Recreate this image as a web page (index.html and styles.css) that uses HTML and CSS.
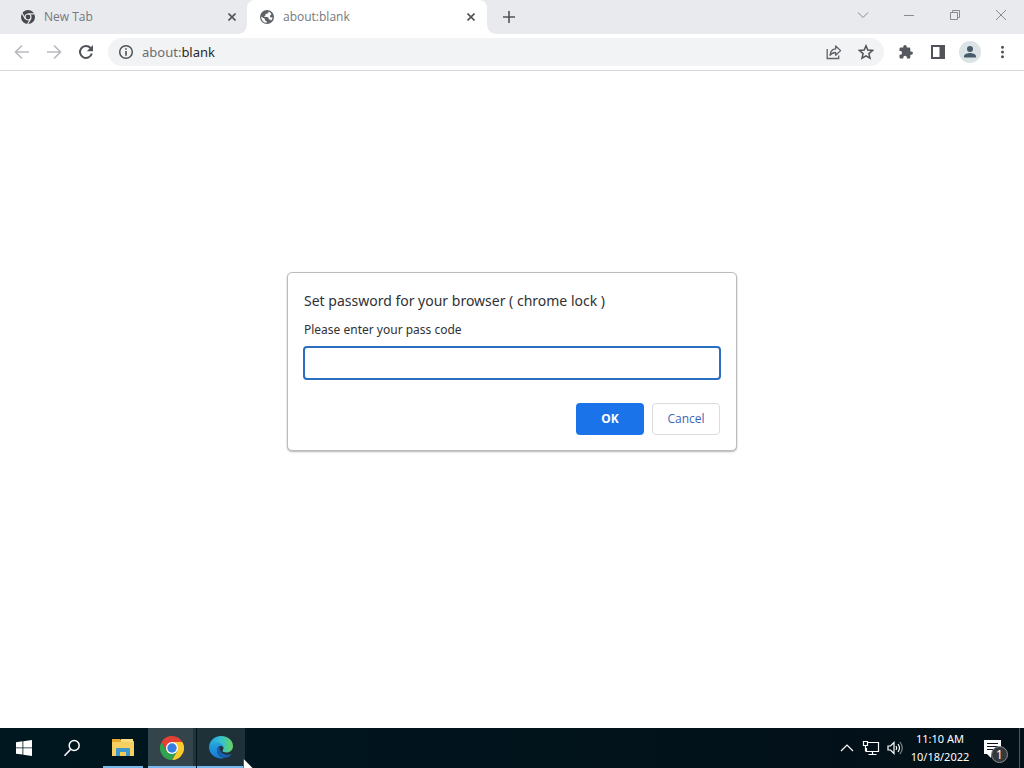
FILE: index.html
```
<!DOCTYPE html>
<html lang="en">
  <head>
    <meta charset="utf-8" />
    <meta name="viewport" content="width=device-width, initial-scale=1.0" />
    <title>about:blank</title>
    <link rel="stylesheet" href="styles.css">
  </head>
  <body>
    <header class="tab-strip">
      <div class="tab">
        <svg class="favicon" viewBox="0 0 16 16">
          <circle cx="8" cy="8" r="7" fill="#45484c" />
          <circle cx="8" cy="8" r="3" fill="none" stroke="#e8eaed" stroke-width="1.2" />
          <path d="M8 4.8h6.4M5.2 9.6L2 4M10.8 9.6L7.6 15" stroke="#e8eaed" stroke-width="1.2" />
        </svg>
        <span class="tab-title">New Tab</span>
        <button class="tab-close" aria-label="Close New Tab">
          <svg width="8" height="8" viewBox="0 0 8 8"><path d="M0.5 0.5l7 7M7.5 0.5l-7 7" /></svg>
        </button>
      </div>
      <div class="tab active">
        <svg class="favicon" viewBox="0 0 16 16">
          <circle cx="8" cy="8" r="7" fill="#5f6368" />
          <path d="M9.500 2.600c.3 1.600-.8 2.200-1.800 2.200-.9 0-1.200.5-1.200 1.200 0 .8-.6 1-1.400 1 .2.900.9 1 2 1h1c1.200 0 1.500.8 1.500 1.600 0 .7.700.9 1.400 1 .8.100 1 .7 1 1.200A6 6 0 0 0 13.600 8.500c-1.500.4-2.600-.2-2.600-1.300 0-1 .8-1.500 1.500-2A6 6 0 0 0 9.500 2.600zM2.200 7.600A5.800 5.800 0 0 0 7.800 13.800c.2-1-.1-1.600-.9-1.800-1-.3-.9-1.100-1-1.800-.1-.8-.7-1-1.500-1.300z" fill="#fff" />
        </svg>
        <span class="tab-title">about:blank</span>
        <button class="tab-close" aria-label="Close about:blank">
          <svg width="8" height="8" viewBox="0 0 8 8"><path d="M0.5 0.5l7 7M7.5 0.5l-7 7" /></svg>
        </button>
      </div>
      <button class="new-tab" aria-label="New tab">
        <svg width="12" height="12" viewBox="0 0 12 12"><path d="M6 0v12M0 6h12" /></svg>
      </button>
      <div class="window-controls">
        <button aria-label="Search tabs">
          <svg width="12" height="12" viewBox="0 0 12 12"><path d="M1 3.500l5 5 5-5" /></svg>
        </button>
        <button aria-label="Minimize">
          <svg width="12" height="12" viewBox="0 0 12 12"><path d="M1 6.500h10" /></svg>
        </button>
        <button aria-label="Restore">
          <svg width="12" height="12" viewBox="0 0 12 12"><path d="M1.500 3.500h7v7h-7zM3.500 3.500v-2h7v7h-2" /></svg>
        </button>
        <button aria-label="Close">
          <svg width="12" height="12" viewBox="0 0 12 12"><path d="M1 1l10 10M11 1L1 11" /></svg>
        </button>
      </div>
    </header>

    <nav class="toolbar">
      <button class="tool" aria-label="Back">
        <svg width="16" height="16" viewBox="0 0 16 16"><path d="M15 8H2M8 1.500L1.500 8 8 14.500" fill="none" stroke="#b9bbbe" stroke-width="1.700" /></svg>
      </button>
      <button class="tool" aria-label="Forward">
        <svg width="16" height="16" viewBox="0 0 16 16"><path d="M1 8h13M8 1.500L14.500 8 8 14.500" fill="none" stroke="#b9bbbe" stroke-width="1.700" /></svg>
      </button>
      <button class="tool" aria-label="Reload">
        <svg width="16" height="16" viewBox="0 0 16 16">
          <path d="M13.800 9.500A6 6 0 1 1 12.500 4" fill="none" stroke="#505357" stroke-width="2" />
          <path d="M15 1v6.200H8.800z" fill="#505357" />
        </svg>
      </button>
      <div class="omnibox">
        <svg width="16" height="16" viewBox="0 0 16 16">
          <circle cx="8" cy="8" r="6.300" fill="none" stroke="#505357" stroke-width="1.500" />
          <path d="M7.200 4.300h1.600v1.500H7.200zM7.200 7h1.600v4.700H7.200z" fill="#505357" />
        </svg>
        <div class="url">about:<span>blank</span></div>
        <button class="tool" aria-label="Share">
          <svg width="16" height="16" viewBox="0 0 16 16" fill="none" stroke="#5f6368" stroke-width="1.300">
            <path d="M1.200 5v9.500h11.500v-3" />
            <path d="M9.700 2v2.900C6 5.200 4.300 7.600 4 11.300c1.300-1.900 3-2.800 5.700-2.800v2.800L14.600 6.600z" stroke-linejoin="round" />
          </svg>
        </button>
        <button class="tool" aria-label="Bookmark">
          <svg width="16" height="16" viewBox="0 0 16 16"><path d="M8 1.800l1.800 4.300 4.700.4-3.600 3.100 1.100 4.600L8 11.800l-4 2.400 1.100-4.600-3.600-3.100 4.700-.4z" fill="none" stroke="#505357" stroke-width="1.500" /></svg>
        </button>
      </div>
      <button class="tool" aria-label="Extensions">
        <svg width="16" height="16" viewBox="0 0 16 16"><path d="M13.300 7.400h-1V4.700c0-.8-.6-1.300-1.300-1.300H8.700v-.8a1.700 1.700 0 0 0-3.400 0v.8H2.800c-.7 0-1.300.6-1.300 1.300v2.400h.8a1.800 1.800 0 0 1 0 3.600h-.8v2.500c0 .7.6 1.300 1.300 1.300h2.500v-.9a1.800 1.800 0 0 1 3.600 0v.9h2.200c.7 0 1.200-.6 1.200-1.300v-2.500h1a1.600 1.600 0 0 0 0-3.300z" fill="#55585c" /></svg>
      </button>
      <button class="tool" aria-label="Side panel">
        <svg width="16" height="16" viewBox="0 0 16 16"><path d="M1 1h14v14H1zM3 3v10h6.500V3z" fill="#505357" fill-rule="evenodd" /></svg>
      </button>
      <button class="tool avatar" aria-label="Profile">
        <svg width="16" height="16" viewBox="0 0 16 16" fill="#465a69"><circle cx="8" cy="5" r="3" /><path d="M2 13.500v-1.300C2 10 6 9 8 9s6 1 6 3.200v1.300z" /></svg>
      </button>
      <button class="tool" aria-label="Menu">
        <svg width="16" height="16" viewBox="0 0 16 16" fill="#505357"><circle cx="8.500" cy="3.300" r="1.500" /><circle cx="8.500" cy="8" r="1.500" /><circle cx="8.500" cy="12.700" r="1.500" /></svg>
      </button>
    </nav>

    <main class="page">
      <form class="dialog" role="dialog" aria-labelledby="dialog-title">
        <h1 id="dialog-title">Set password for your browser ( chrome lock )</h1>
        <label for="passcode">Please enter your pass code</label>
        <input id="passcode" type="password">
        <div class="dialog-actions">
          <button class="ok" type="button">OK</button>
          <button class="cancel" type="button">Cancel</button>
        </div>
      </form>
    </main>

    <footer class="taskbar">
      <button class="task" aria-label="Start">
        <svg width="16" height="16" viewBox="0 0 16 16" fill="#fff"><path d="M0 2.200l6.500-.9v6.200H0zM7.300 1.200L16 0v7.500H7.300zM0 8.300h6.500v6.300L0 13.700zM7.300 8.300H16V16l-8.700-1.200z" /></svg>
      </button>
      <button class="task search" aria-label="Search">
        <svg width="18" height="18" viewBox="0 0 18 18"><path d="M7.500 10.500L1.500 16.800" stroke="#fff" stroke-width="1.600" /><circle cx="11.200" cy="6.500" r="5" fill="none" stroke="#fff" stroke-width="1.500" /></svg>
      </button>
      <button class="task explorer" aria-label="File Explorer">
        <svg width="22" height="20" viewBox="0 0 22 20">
          <path d="M0 2h8l2 2h12v14H0z" fill="#e9a92c" />
          <path d="M9 2h12v3H9z" fill="#f7dc82" />
          <path d="M0 5h22v14H0z" fill="#f5d061" />
          <path d="M4 12q0-1 1-1h12q1 0 1 1v7h-4v-4H8v4H4z" fill="#3f97cb" />
          <path d="M8 15h6v4H8z" fill="#f3cc55" />
        </svg>
      </button>
      <button class="task open chrome" aria-label="Google Chrome">
        <svg width="24" height="24" viewBox="0 0 24 24">
          <path d="M12 12V6h10.400A12 12 0 0 1 12 24l5.200-9z" fill="#fcca2d" />
          <path d="M12 12l5.200 3L12 24A12 12 0 0 1 1.600 6l5.200 9z" fill="#31a350" />
          <path d="M1.600 6l5.200 9L12 12V6.100h10.400A12 12 0 0 0 1.600 6z" fill="#e44134" />
          <circle cx="12" cy="12" r="6" fill="#fff" />
          <circle cx="12" cy="12" r="4.700" fill="#367de4" />
        </svg>
      </button>
      <button class="task open" aria-label="Microsoft Edge">
        <svg width="24" height="24" viewBox="0 0 24 24">
          <defs>
            <linearGradient id="wave" x1="0" y1="0" x2="1" y2="0">
              <stop offset="0" stop-color="#279fdc" />
              <stop offset="0.500" stop-color="#35c1d1" />
              <stop offset="1" stop-color="#68d35b" />
            </linearGradient>
            <linearGradient id="body" x1="0" y1="0" x2="0" y2="1">
              <stop offset="0" stop-color="#26a4df" />
              <stop offset="1" stop-color="#1479d2" />
            </linearGradient>
          </defs>
          <path d="M0 12C0 5 5 0 12 0c7 0 12 4.500 12 10 0 4-3 6.500-6.500 6.500-2.500 0-4-.8-4-1.700 0-.7 1-1.200 1-3 0-2.400-2.600-4.600-6-4.600C4 7.200 1 9 0 12z" fill="url(#wave)" />
          <path d="M0 12c1-3.500 4-5.400 8.200-5.400 3.700 0 6.300 2.300 6.300 5.200-.6-1.200-1.700-1.800-3-1.800-2 0-3.500 2-3.500 4.400 0 4.600 4.400 7.600 9 7.100A12 12 0 0 1 0 12z" fill="url(#body)" />
          <path d="M10.500 10.200C8.700 11 8 12.700 8 14.400c0 5.600 6.700 8.400 11.700 6.500 1.300-.9 2.200-1.900 3-3.200-4.700 2.300-12.600.5-12.200-7.500z" fill="#1a5fad" />
        </svg>
      </button>
      <div class="tray">
        <button aria-label="Show hidden icons">
          <svg width="16" height="16" viewBox="0 0 16 16"><path d="M2 11l6-6 6 6" /></svg>
        </button>
        <button aria-label="Network">
          <svg width="18" height="16" viewBox="0 0 18 16"><path d="M6 2.500h10.500v9H4.500V8M10.500 11.500v3M6.500 14.500h8M1.500 1.500h4v4h-4zM3.500 5.500v6" /></svg>
        </button>
        <button aria-label="Volume">
          <svg width="18" height="16" viewBox="0 0 18 16"><path d="M2 6h2.500L8 2.500v11L4.500 10H2zM10 6q1.500 2 0 4M12 4q3 4 0 8" /><path d="M14 2q4.500 6 0 12" opacity="0.500" /></svg>
        </button>
        <time class="clock" datetime="2022-10-18T11:10">11:10 AM<br>10/18/2022</time>
        <button class="notifications" aria-label="Notifications">
          <svg width="24" height="24" viewBox="0 0 24 24">
            <path d="M0 0h17v14H7v4l-4-4H0z" fill="#fff" stroke="none" />
            <path d="M3 3.500h11M3 6.500h11M3 9.500h7" stroke="#06141f" />
          </svg>
          <span class="badge">1</span>
        </button>
      </div>
    </footer>

    <svg class="cursor" width="12" height="19" viewBox="0 0 12 19"><path d="M0.500 0.500v16l3.700-3.600 2.400 5.500 2.400-1-2.300-5.400h5z" fill="#fff" stroke="#111" stroke-width="0.500" /></svg>
  </body>
</html>
```

FILE: styles.css
```
* {
  box-sizing: border-box;
}

body {
  display: flex;
  flex-direction: column;
  height: 100vh;
  margin: 0;
  overflow: hidden;
  background-color: #fff;
  color: #303134;
  font-family: "Noto Sans", "Open Sans", sans-serif;
  font-size: 12px;
}

button {
  display: flex;
  justify-content: center;
  align-items: center;
  margin: 0;
  padding: 0;
  border: none;
  background: none;
  font-family: inherit;
}

svg {
  display: block;
  flex-shrink: 0;
}

/* Tabs */
.tab-strip {
  display: flex;
  height: 34px;
  background-color: #e8eaed;
}

.tab {
  display: flex;
  align-items: center;
  flex: 0 1 240px;
  min-width: 0;
  padding: 0 10px 0 12px;
  color: #75787c;
}

.tab:first-child {
  flex-basis: 247px;
  padding: 0 9px 0 20px;
}

.tab.active {
  position: relative;
  background-color: #fff;
  border-radius: 8px 8px 0 0;
}

/* Flared feet of the open tab */
.tab.active::before,
.tab.active::after {
  content: "";
  position: absolute;
  bottom: 0;
  width: 8px;
  height: 8px;
}

.tab.active::before {
  right: 100%;
  background: radial-gradient(circle at 0 0, transparent 7px, #fff 8px);
}

.tab.active::after {
  left: 100%;
  background: radial-gradient(circle at 100% 0, transparent 7px, #fff 8px);
}

.favicon {
  width: 16px;
  height: 16px;
}

.tab-title {
  flex: 1;
  margin-left: 8px;
  overflow: hidden;
  font-family: "Open Sans", "Noto Sans", sans-serif;
  line-height: 16px;
  white-space: nowrap;
}

.tab-close {
  width: 12px;
  height: 16px;
}

.tab-close svg,
.new-tab svg {
  stroke: #505357;
  stroke-width: 1.6;
}

.new-tab {
  width: 44px;
}

.window-controls {
  display: flex;
  height: 29px;
  margin-left: auto;
}

.window-controls button {
  width: 46px;
}

.window-controls svg {
  fill: none;
  stroke: #8a8c90;
}

/* Toolbar */
.toolbar {
  display: flex;
  align-items: center;
  height: 37px;
  padding: 0 6px;
  border-bottom: 1px solid #d5d7da;
}

.tool {
  flex-shrink: 0;
  width: 32px;
  height: 28px;
}

.omnibox {
  display: flex;
  align-items: center;
  flex: 1;
  height: 28px;
  margin: 0 6px;
  padding: 0 2px 0 10px;
  border-radius: 14px;
  background-color: #f1f3f4;
}

.url {
  flex: 1;
  margin-left: 8px;
  color: #6a6d72;
  font-size: 13px;
}

.url span {
  color: #27292c;
}

.avatar svg {
  box-sizing: content-box;
  padding: 3px;
  border-radius: 50%;
  background-color: #dce3e7;
}

/* Prompt */
.page {
  display: flex;
  flex: 1;
  justify-content: center;
  align-items: flex-start;
  min-height: 0;
  padding: 201px 16px 0;
}

.dialog {
  display: flex;
  flex-direction: column;
  width: 100%;
  max-width: 450px;
  padding: 16px 15px 15px;
  border: 1px solid #b9bbbd;
  border-radius: 5px;
  background-color: #fff;
  box-shadow: 0 1px 2px rgba(0, 0, 0, 0.3);
}

.dialog h1 {
  margin: 0 1px;
  font-size: 14px;
  font-weight: normal;
  line-height: 24px;
}

.dialog label {
  margin: 7px 1px 6px;
  line-height: 20px;
}

.dialog input {
  width: 100%;
  height: 34px;
  padding: 0 8px;
  border: 2px solid #2b6fc0;
  border-radius: 4px;
  outline: none;
  background-color: #fff;
  font: inherit;
}

.dialog-actions {
  display: flex;
  justify-content: flex-end;
  gap: 8px;
  margin: 23px 1px 0;
}

.dialog-actions button {
  width: 68px;
  height: 32px;
  padding-bottom: 1px;
  border-radius: 4px;
  font-size: 12px;
}

.dialog-actions .ok {
  background-color: #1a73e8;
  color: #fff;
  font-weight: bold;
}

.dialog-actions .cancel {
  border: 1px solid #dadce0;
  color: #3c65b5;
  font-family: "Open Sans", "Noto Sans", sans-serif;
  font-weight: 500;
}

/* Taskbar */
.taskbar {
  display: flex;
  height: 40px;
  background: linear-gradient(to right, #001720, #031018);
}

.task {
  width: 48px;
}

.task.explorer {
  width: 40px;
  margin: 0 5px 0 7px;
  border-bottom: 2px solid #76b9ed;
}

.task.open {
  padding-top: 2px;
  background-color: #1f3138;
  border-bottom: 2px solid #76b9ed;
}

.task.chrome {
  margin-right: 1px;
  background: linear-gradient(to right, #33454b 45px, #22343b 45px);
}

.tray {
  display: flex;
  margin-left: auto;
  padding-right: 4px;
  color: #fff;
}

.tray button {
  width: 24px;
  color: #fff;
}

.tray svg {
  fill: none;
  stroke: #fff;
  stroke-width: 1.2;
}

.clock {
  width: 66px;
  padding-top: 2px;
  font-size: 11px;
  line-height: 18px;
  text-align: center;
}

.tray .notifications {
  position: relative;
  width: 47px;
  padding-top: 7px;
  border-right: 1px solid #4b565d;
}

.badge {
  position: absolute;
  left: 18px;
  top: 18px;
  width: 17px;
  height: 17px;
  border: 1px solid #8a8e91;
  border-radius: 50%;
  background-color: #34383c;
  font-size: 12px;
  line-height: 15px;
  text-align: center;
}

.cursor {
  position: absolute;
  left: 243px;
  bottom: -9px;
}
```
